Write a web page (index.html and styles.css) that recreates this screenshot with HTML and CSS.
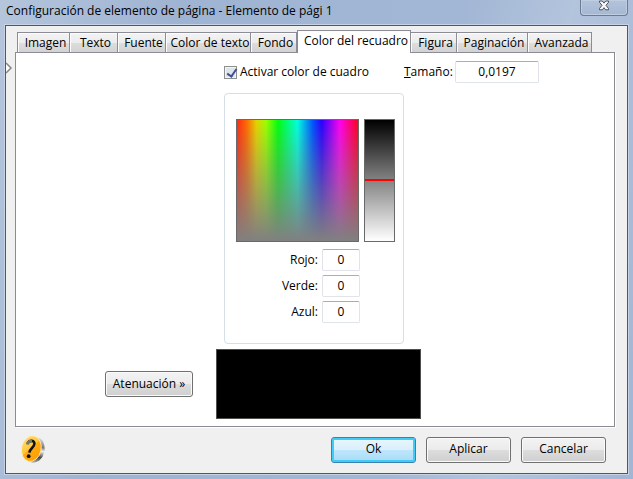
FILE: index.html
```html
<!DOCTYPE html>
<html lang="es">
<head>
    <meta charset="UTF-8">
    <meta name="viewport" content="width=device-width, initial-scale=1.0">
    <title>Configuración de elemento de página</title>
    <link rel="stylesheet" href="styles.css">
</head>
<body>

    <div class="window">
        <!-- Barra de título -->
        <header class="titlebar">
            <h1 class="title">Configuración de elemento de página - Elemento de pági 1</h1>
            <button class="close" type="button" aria-label="Cerrar">
                <svg width="12" height="11" viewBox="0 0 12 11">
                    <path d="M1.5 1H4.2L6 3.1L7.8 1H10.5V2.3L8 5.3L10.5 8.5V9.8H7.6L6 7.7L4.4 9.8H1.5V8.5L4 5.3L1.5 2.3Z" fill="#f8f8f8" stroke="#4d525e"/>
                </svg>
            </button>
        </header>

        <main class="client">
            <svg class="expander" width="7" height="12" viewBox="0 0 7 12">
                <path d="M0 1L5 6L0 11" fill="#fff" stroke="#858585" stroke-width="1.5"/>
            </svg>

            <!-- Pestañas -->
            <nav class="tabs" role="tablist">
                <button class="tab tab-imagen" type="button" role="tab">Imagen</button>
                <button class="tab tab-texto" type="button" role="tab">Texto</button>
                <button class="tab tab-fuente" type="button" role="tab">Fuente</button>
                <button class="tab tab-color" type="button" role="tab">Color de texto</button>
                <button class="tab tab-fondo" type="button" role="tab">Fondo</button>
                <button class="tab tab-recuadro active" type="button" role="tab" aria-selected="true">Color del recuadro</button>
                <button class="tab tab-figura" type="button" role="tab">Figura</button>
                <button class="tab tab-paginacion" type="button" role="tab">Paginación</button>
                <button class="tab tab-avanzada" type="button" role="tab">Avanzada</button>
            </nav>

            <section class="panel">
                <div class="options">
                    <input class="check" type="checkbox" id="activar" checked>
                    <label class="check-label" for="activar">Activar color de cuadro</label>
                    <label class="size-label" for="tamano"><u>T</u>amaño:</label>
                    <input class="field size" type="text" id="tamano" value="0,0197">
                </div>

                <!-- Selector de color -->
                <div class="picker">
                    <div class="maps">
                        <div class="spectrum"></div>
                        <div class="brightness">
                            <div class="marker"></div>
                        </div>
                    </div>
                    <div class="channels">
                        <label for="rojo">Rojo:</label>
                        <input class="field" type="text" id="rojo" value="0">
                        <label for="verde">Verde:</label>
                        <input class="field" type="text" id="verde" value="0">
                        <label for="azul">Azul:</label>
                        <input class="field" type="text" id="azul" value="0">
                    </div>
                </div>

                <button class="button fade" type="button">Atenuación »</button>
                <div class="preview"></div>
            </section>

            <footer class="footer">
                <button class="help" type="button" aria-label="Ayuda">
                    <svg width="26" height="29" viewBox="0 0 26 29">
                        <defs>
                            <linearGradient id="coin" x1="0" y1="0" x2="1" y2="1">
                                <stop offset="0" stop-color="#ffdf7a"/>
                                <stop offset="0.45" stop-color="#ffc83c"/>
                                <stop offset="0.5" stop-color="#ffab10"/>
                                <stop offset="1" stop-color="#ff9a00"/>
                            </linearGradient>
                            <linearGradient id="rim" x1="0" y1="0" x2="0" y2="1">
                                <stop offset="0" stop-color="#e4e4e4"/>
                                <stop offset="0.35" stop-color="#777"/>
                                <stop offset="0.5" stop-color="#f0f0f0"/>
                                <stop offset="0.75" stop-color="#444"/>
                                <stop offset="1" stop-color="#bbb"/>
                            </linearGradient>
                        </defs>
                        <ellipse cx="14.5" cy="14.8" rx="10" ry="13" transform="rotate(12 14.5 14.8)" fill="url(#rim)"/>
                        <ellipse cx="11.3" cy="13.6" rx="9.8" ry="13" transform="rotate(12 11.3 13.6)" fill="url(#coin)" stroke="#fff0c4" stroke-width="0.8"/>
                        <path d="M7.5 9C8.5 5.2 14.6 4.6 14.4 8.8C14.2 12.6 10 13.2 9.4 17.6" fill="none" stroke="#111" stroke-width="2.6"/>
                        <path d="M7.3 9.4C7.8 7 9.6 5.9 12 6.1" fill="none" stroke="#777" stroke-width="2.6"/>
                        <circle cx="8.7" cy="21.2" r="1.9" fill="#111"/>
                    </svg>
                </button>
                <button class="button default" type="button">Ok</button>
                <button class="button" type="button">Aplicar</button>
                <button class="button" type="button">Cancelar</button>
            </footer>
        </main>
    </div>

</body>
</html>
```
FILE: styles.css
```css
* {
    box-sizing: border-box;
}

body {
    margin: 0;
    font-family: "Open Sans", "Noto Sans", sans-serif;
    font-size: 12px;
    line-height: 16px;
    color: #000;
}

button,
input {
    font: inherit;
    color: inherit;
    margin: 0;
    padding: 0;
}

.window {
    display: flex;
    flex-direction: column;
    min-height: 100vh;
    padding: 0 5px 5px;
    background: linear-gradient(100deg, #b4c5dc 0%, #9fb3d2 25%, #a2b7d5 65%, #b3c4dd 80%, #a2b5d4 100%);
}

/* Barra de título */
.titlebar {
    display: flex;
    justify-content: space-between;
    align-items: flex-start;
    height: 25px;
}

.title {
    margin: 3px 0 0 1px;
    font-size: 12px;
    font-weight: normal;
    line-height: 16px;
    white-space: nowrap;
}

.close {
    display: flex;
    justify-content: center;
    width: 48px;
    height: 16px;
    background: linear-gradient(#b3c3da, #a5b8d4);
    border: 1px solid #6d7b92;
    border-top: 0;
    border-radius: 0 0 4px 4px;
    box-shadow: inset 0 0 0 1px #bfcde1;
}

/* Área de cliente */
.client {
    position: relative;
    flex: 1;
    display: flex;
    flex-direction: column;
    padding: 4px 12px 9px 9px;
    background: #f0f0f0;
    border: 1px solid #4d5968;
    box-shadow: 0 0 0 1px #c5d3e5;
}

.expander {
    position: absolute;
    left: 0;
    top: 36px;
}

/* Pestañas */
.tabs {
    display: flex;
    align-items: flex-end;
    height: 22px;
    padding-left: 2px;
}

.tab {
    height: 20px;
    padding-left: 4px;
    background: linear-gradient(#f3f3f3 0%, #ececec 50%, #dedede 50%, #d2d2d2 100%);
    border: 1px solid #8b8c95;
    border-left-width: 0;
    border-bottom: 0;
    box-shadow: inset 1px 1px 0 #fcfcfc;
    white-space: nowrap;
}

.tab-imagen {
    width: 53px;
    border-left-width: 1px;
}

.tab-texto,
.tab-fuente {
    width: 48px;
}

.tab-color {
    width: 85px;
}

.tab-fondo {
    width: 46px;
}

.tab-recuadro {
    width: 114px;
}

.tab-figura {
    width: 46px;
}

.tab-paginacion {
    width: 71px;
}

.tab-avanzada {
    width: 64px;
}

/* La pestaña activa tapa el borde superior del panel */
.tab.active {
    height: 23px;
    margin-bottom: -1px;
    padding-bottom: 3px;
    background: #fff;
    border-left-width: 1px;
    z-index: 1;
}

/* Panel */
.panel {
    flex: 1;
    display: grid;
    grid-template-columns: 1fr 205px 193px;
    grid-template-rows: 22px 256px 70px;
    align-content: start;
    row-gap: 5px;
    padding-top: 8px;
    background: #fff;
    border: 1px solid #8b8c95;
    box-shadow: 1px 1px 0 #fff;
}

.options {
    grid-column: 2 / 4;
    display: flex;
    align-items: center;
    padding-left: 8px;
    white-space: nowrap;
}

.check {
    appearance: none;
    width: 13px;
    height: 13px;
    background: #dfe3ea;
    border: 1px solid #8e8f8f;
    box-shadow: inset 0 0 0 1px #f4f4f4;
}

.check:checked::before {
    content: "";
    display: block;
    width: 4px;
    height: 8px;
    margin: 0 0 0 4px;
    border: solid #3c4f94;
    border-width: 0 2px 2px 0;
    transform: rotate(35deg);
}

.check-label {
    width: 164px;
    margin-left: 3px;
}

.size-label {
    width: 51px;
}

.field {
    width: 38px;
    height: 22px;
    padding-bottom: 1px;
    text-align: center;
    background: #fff;
    border: 1px solid #e0e3ea;
    border-top-color: #abadb3;
    border-radius: 2px;
}

.size {
    width: 84px;
}

/* Selector de color */
.picker {
    grid-column: 2;
    margin: 5px 17px 0 8px;
    padding: 25px 8px 0 11px;
    border: 1px solid #d5dfe5;
    border-radius: 4px;
}

.maps {
    display: flex;
    gap: 5px;
    height: 123px;
}

.spectrum {
    width: 123px;
    border: 1px solid #696969;
    background:
        linear-gradient(rgba(128, 128, 128, 0), #808080),
        linear-gradient(to right, #ff2a14 0%, #ff6a00 8%, #e6d200 16%, #9cff00 24%, #00ff10 34%, #00ffe0 50%, #0050ff 63%, #2a00ff 70%, #ff00f0 85%, #ff0080 93%, #ff0020 100%);
}

.brightness {
    width: 31px;
    padding-top: 59px;
    border: 1px solid #696969;
    background: linear-gradient(#000, #848484 50%, #fff);
}

.marker {
    height: 2px;
    background: #f00;
}

.channels {
    display: grid;
    grid-template-columns: 82px 38px;
    column-gap: 4px;
    row-gap: 4px;
    align-items: center;
    margin-top: 7px;
    font-weight: 500;
}

.channels label {
    text-align: right;
}

.channels .field {
    font-weight: normal;
}

.preview {
    grid-column: 2;
    background: #000;
    border: 1px solid #4f4f4f;
}

/* Botones */
.button {
    width: 85px;
    height: 26px;
    padding-bottom: 1px;
    background: linear-gradient(#f3f3f3 0%, #ebebeb 50%, #dddddd 50%, #cfcfcf 100%);
    border: 1px solid #707070;
    border-radius: 3px;
    box-shadow: inset 0 0 0 1px #fafafa;
    white-space: nowrap;
}

.default {
    background: linear-gradient(#eaf6fd 0%, #d9f0fc 50%, #bee6fd 50%, #a9dbf5 100%);
    border-color: #3c7fb1;
    box-shadow: inset 0 0 0 2px #3fcdf8;
}

.fade {
    grid-column: 1;
    justify-self: end;
    align-self: center;
    width: 88px;
    margin-right: 23px;
}

.footer {
    display: flex;
    justify-content: flex-end;
    align-items: center;
    gap: 10px;
    padding: 8px 9px 0 5px;
}

.help {
    height: 29px;
    margin-right: auto;
    background: none;
    border: 0;
}

.help svg {
    display: block;
}
```
